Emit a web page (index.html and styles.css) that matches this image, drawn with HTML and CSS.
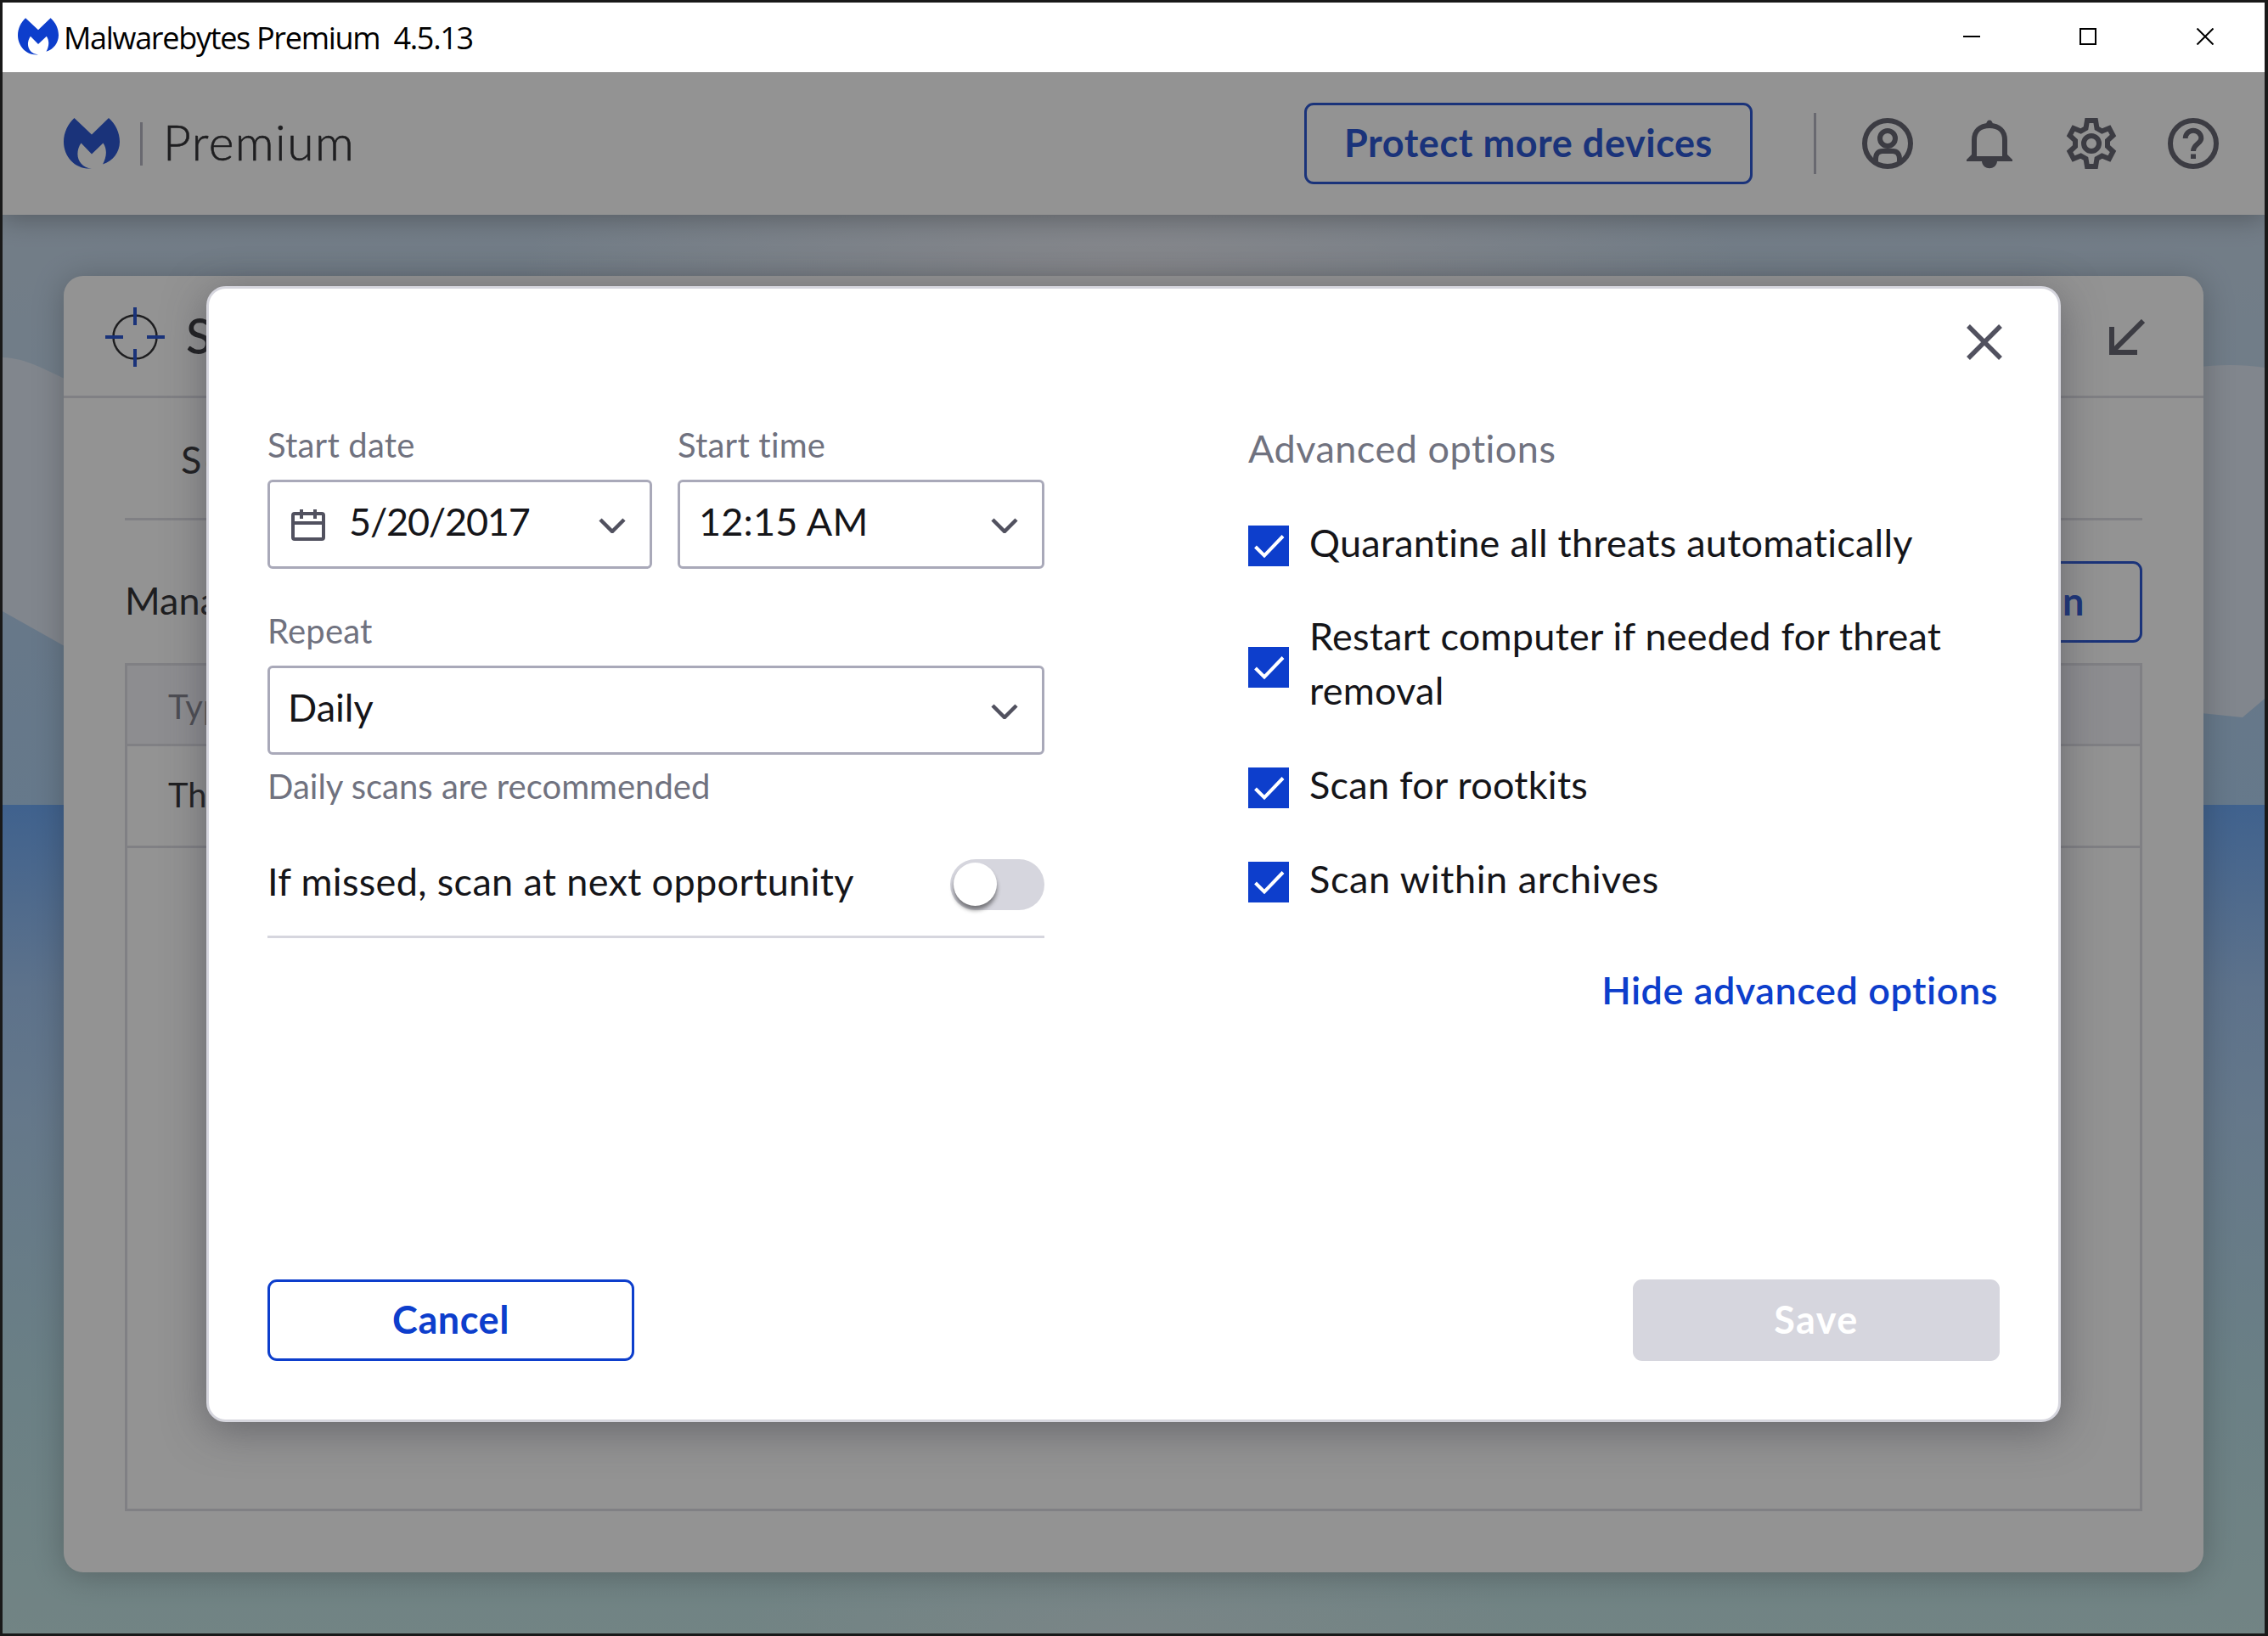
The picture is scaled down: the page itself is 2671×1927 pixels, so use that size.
FILE: index.html
```html
<!doctype html>
<html lang="en">
<head>
  <meta charset="utf-8">
  <title>Malwarebytes Premium</title>
  <link rel="stylesheet" href="styles.css">
</head>
<body>
  <div class="window">
    <div class="titlebar">
      <svg class="titlebar-logo" viewBox="0 0 66 60"><path d="M12.500 0L33 19.500L53 0C61 7 66 17 66 28C66 40 58 51 46 54.500C50 47 52 38 46.500 29.500L33 42.500L20.500 29.500C12 42 17 58 33 59.500C14 61 0 46 0 28C0 17 5 7 12.500 0Z"/></svg>
      <span class="titlebar-text">Malwarebytes Premium&nbsp; 4.5.13</span>
      <svg class="titlebar-buttons" width="295" height="20" viewBox="0 0 295 20"><path d="M0 10H20M138 1H156V19H138ZM275.500 .5L294.500 19.500M294.500 .5L275.500 19.500"/></svg>
    </div>

    <div class="app">
      <header class="header">
        <svg class="header-logo" viewBox="0 0 66 60"><path d="M12.500 0L33 19.500L53 0C61 7 66 17 66 28C66 40 58 51 46 54.500C50 47 52 38 46.500 29.500L33 42.500L20.500 29.500C12 42 17 58 33 59.500C14 61 0 46 0 28C0 17 5 7 12.500 0Z"/></svg>
        <span class="brand">Premium</span>
        <button class="btn btn-protect"><span>Protect more devices</span></button>
        <div class="header-icons">
          <svg class="icon" viewBox="0 0 60 60"><circle cx="30" cy="30" r="27"/><circle cx="30" cy="24" r="9"/><path d="M16 51V48C16 42 19 39 24 39H36C41 39 44 42 44 48V51"/></svg>
          <svg class="icon" viewBox="0 0 60 60"><path d="M12 46V26C12 15 19 9 30 9S48 15 48 26V46"/><path class="icon-fill" d="M26 8C26 .5 34 .5 34 8ZM3 51V49L9 43V45H51V43L57 49V51H39C38 62 22 62 21 51Z"/></svg>
          <svg class="icon" viewBox="0 0 60 60"><path d="M25 3H35L36.500 12L42.500 15.500L51 12L55.500 20.500L49 26.500V33.500L55.500 39.500L51 48L42.500 44.500L36.500 48L35 57H25L23.500 48L17.500 44.500L9 48L4.500 39.500L11 33.500V26.500L4.500 20.500L9 12L17.500 15.500L23.500 12Z"/><circle cx="30" cy="30" r="9"/></svg>
          <svg class="icon" viewBox="0 0 60 60"><circle cx="30" cy="30" r="27"/><path d="M20.700 24A9.300 9.300 0 0 1 39.300 24C39.300 30 30 31 30 39M30 42.500V48"/></svg>
        </div>
      </header>

      <div class="scene">
        <svg class="landscape" viewBox="0 0 2664 1671" preserveAspectRatio="none">
          <defs>
            <linearGradient id="sea" x1="0" y1="0" x2="0" y2="1">
              <stop offset="0" stop-color="#589cf4"/>
              <stop offset=".22" stop-color="#92bcee"/>
              <stop offset=".38" stop-color="#a2c8ec"/>
              <stop offset=".55" stop-color="#a8d0e6"/>
              <stop offset=".71" stop-color="#aed8e2"/>
              <stop offset="1" stop-color="#bce0e0"/>
            </linearGradient>
            <radialGradient id="glow">
              <stop offset="0" stop-color="#e6e8f0"/>
              <stop offset="1" stop-color="#e6e8f0" stop-opacity="0"/>
            </radialGradient>
          </defs>
          <ellipse cx="1330" cy="70" rx="720" ry="220" fill="url(#glow)"/>
          <path fill="#dae4f2" d="M0 168C30 169 52 184 80 196V512L0 467Z"/>
          <path fill="#dae4f2" d="M2580 180Q2625 174 2664 180V570L2638 592L2580 586Z"/>
          <rect y="695" width="2664" height="976" fill="url(#sea)"/>
          <ellipse class="reflection" cx="1330" cy="1671" rx="460" ry="130" fill="url(#glow)"/>
        </svg>
        <main class="card">
          <div class="card-head">
            <svg class="scanner-icon" viewBox="0 0 70 70"><circle cx="35" cy="35" r="25.500"/><path d="M35 0V21M35 49V70M0 35H21M49 35H70"/></svg>
            <h1>Scanner</h1>
            <svg class="collapse" viewBox="0 0 42 42"><path d="M40 2L3 39M3 9V39H33"/></svg>
          </div>
          <div class="card-body">
            <div class="tabs"><span>Scan</span></div>
            <div class="manage">
              <span>Manage</span>
              <button class="btn btn-schedule"><span>Scan</span></button>
            </div>
            <div class="table">
              <div class="table-head">Type</div>
              <div class="table-row">Threat</div>
            </div>
          </div>
        </main>
      </div>

      <div class="backdrop"></div>
    </div>
  </div>

  <section class="modal">
    <svg class="close" viewBox="0 0 42 42"><path d="M2 2L40 40M40 2L2 40"/></svg>
    <div class="columns">
      <div class="schedule">
        <div class="field-pair">
          <div class="field">
            <label>Start date</label>
            <div class="select">
              <svg class="calendar" viewBox="0 0 40 37"><path d="M4 5H36Q38 5 38 7V33Q38 35 36 35H4Q2 35 2 33V7Q2 5 4 5ZM2 16H38M12 0V11M28 0V11"/></svg>
              <span class="date">5/20/2017</span>
              <svg class="chevron" viewBox="0 0 32 18"><path d="M2 2L16 16L30 2"/></svg>
            </div>
          </div>
          <div class="field">
            <label>Start time</label>
            <div class="select">
              <span class="time">12:15 AM</span>
              <svg class="chevron" viewBox="0 0 32 18"><path d="M2 2L16 16L30 2"/></svg>
            </div>
          </div>
        </div>
        <div class="field field-repeat">
          <label>Repeat</label>
          <div class="select">
            <span>Daily</span>
            <svg class="chevron" viewBox="0 0 32 18"><path d="M2 2L16 16L30 2"/></svg>
          </div>
          <p class="hint">Daily scans are recommended</p>
        </div>
        <div class="missed">
          <span>If missed, scan at next opportunity</span>
          <div class="toggle"><div class="knob"></div></div>
        </div>
      </div>

      <div class="advanced">
        <h2>Advanced options</h2>
        <div class="check">
          <svg class="box" viewBox="0 0 48 48"><path d="M8.500 25L19 35.500L41 12.500"/></svg>
          <span>Quarantine all threats automatically</span>
        </div>
        <div class="check check-tall">
          <svg class="box" viewBox="0 0 48 48"><path d="M8.500 25L19 35.500L41 12.500"/></svg>
          <span>Restart computer if needed for threat<br>removal</span>
        </div>
        <div class="check">
          <svg class="box" viewBox="0 0 48 48"><path d="M8.500 25L19 35.500L41 12.500"/></svg>
          <span>Scan for rootkits</span>
        </div>
        <div class="check check-archives">
          <svg class="box" viewBox="0 0 48 48"><path d="M8.500 25L19 35.500L41 12.500"/></svg>
          <span>Scan within archives</span>
        </div>
        <a class="hide-link">Hide advanced options</a>
      </div>
    </div>
    <div class="actions">
      <button class="btn btn-cancel"><span>Cancel</span></button>
      <button class="btn btn-save"><span>Save</span></button>
    </div>
  </section>
</body>
</html>
```
FILE: styles.css
```css
* {
  box-sizing: border-box;
}

html, body {
  margin: 0;
  width: 2671px;
  height: 1927px;
  overflow: hidden;
}

body {
  background: #191919;
  padding: 3px 4px 3px 3px;
  font-family: Lato, "Open Sans", sans-serif;
  font-size: 45px;
  line-height: 64px;
  font-variant-ligatures: none;
  color: #151519;
}

svg {
  display: block;
  flex: none;
  fill: none;
}

span {
  white-space: nowrap;
}

.window {
  height: 1921px;
  display: flex;
  flex-direction: column;
}

.titlebar {
  height: 82px;
  background: #fff;
  display: flex;
  align-items: center;
  padding: 0 60px 2px 18px;
  color: #000;
}

.titlebar-logo {
  width: 48px;
  height: 44px;
  margin-top: -1px;
  fill: #0d3ecc;
}

.titlebar-text {
  font-family: "Open Sans", sans-serif;
  font-size: 36px;
  letter-spacing: -1.3px;
  margin: 3px 0 0 6px;
}

.titlebar-buttons {
  margin: -1px 0 0 auto;
  stroke: #000;
  stroke-width: 2;
}

.app {
  position: relative;
  flex: 1;
  display: flex;
  flex-direction: column;
  overflow: hidden;
}

/* Header */
.header {
  position: relative;
  z-index: 1;
  height: 168px;
  background: #fff;
  box-shadow: 0 6px 28px rgba(0, 0, 0, .3);
  display: flex;
  align-items: center;
  padding: 0 54px 0 72px;
}

.header-logo {
  width: 66px;
  height: 60px;
  fill: #0d3ecc;
}

.brand {
  border-left: 3px solid #aaaab9;
  height: 51px;
  line-height: 46px;
  margin-left: 24px;
  padding-left: 24px;
  font-size: 57px;
  font-weight: 300;
  letter-spacing: 1.4px;
  -webkit-text-stroke: .6px #151519;
}

.btn {
  height: 96px;
  border: 3px solid #0d3ecc;
  border-radius: 11px;
  background: #fff;
  color: #0d3ecc;
  font: 700 45px/60px Lato, "Open Sans", sans-serif;
  letter-spacing: .55px;
  padding: 0 0 3px;
}

.btn-protect {
  width: 528px;
  margin-left: auto;
}

.header-icons {
  display: flex;
  align-items: center;
  gap: 60px;
  height: 72px;
  margin-left: 72px;
  border-left: 3px solid #aaaab9;
  padding-left: 54px;
}

.icon {
  width: 60px;
  height: 60px;
  stroke: #51515f;
  stroke-width: 6;
}

.icon-fill {
  fill: #51515f;
  stroke: none;
}

/* Scanner page behind the dialog */
.scene {
  position: relative;
  flex: 1;
  padding: 72px;
  background: linear-gradient(#bed2e6, #b8d2ea 250px, #a6c8ea 500px, #a4caee 700px);
}

.landscape {
  position: absolute;
  inset: 0;
  width: 100%;
  height: 100%;
}

.reflection {
  opacity: .4;
}

.card {
  position: relative;
  height: 1527px;
  background: #fff;
  border-radius: 23px;
  box-shadow: 0 4px 36px rgba(0, 0, 0, .28);
}

.card-head {
  height: 144px;
  border-bottom: 3px solid #d9d9e0;
  display: flex;
  align-items: center;
  padding: 2px 69px 0 49px;
}

.scanner-icon {
  width: 70px;
  height: 70px;
  stroke: #0d3ecc;
  stroke-width: 4;
}

.scanner-icon circle {
  stroke: #151519;
  stroke-width: 2.5;
}

h1 {
  margin: -4px 0 0 25px;
  font-size: 57px;
  font-weight: 500;
}

.collapse {
  width: 42px;
  height: 42px;
  margin-left: auto;
  stroke: #51515f;
  stroke-width: 6;
}

.card-body {
  padding: 0 72px;
}

.tabs {
  height: 144px;
  border-bottom: 3px solid #d9d9e0;
  padding: 40px 66px;
  letter-spacing: 4px;
}

.manage {
  display: flex;
  align-items: center;
  justify-content: space-between;
  padding: 48px 0 24px;
}

.manage > span {
  margin-top: -4px;
}

.btn-schedule {
  width: 432px;
  text-align: right;
  padding-right: 65px;
}

.table {
  border: 3px solid #d9d9e0;
  height: 999px;
  font-size: 40px;
}

.table-head {
  height: 95px;
  padding: 16px 48px;
  background: #f3f3f8;
  border-bottom: 3px solid #d9d9e0;
  color: #72727f;
}

.table-row {
  height: 120px;
  padding: 25px 48px;
  border-bottom: 3px solid #d9d9e0;
}

.backdrop {
  position: absolute;
  z-index: 2;
  inset: 0;
  background: rgba(40, 40, 40, .5);
}

/* Schedule dialog */
.modal {
  position: absolute;
  z-index: 3;
  left: 243px;
  top: 337px;
  width: 2184px;
  height: 1338px;
  background: #fff;
  border: 3px solid #d6d6de;
  border-radius: 23px;
  box-shadow: 0 10px 48px rgba(60, 60, 70, .5);
  padding: 42px 69px 69px;
  display: flex;
  flex-direction: column;
}

.close {
  width: 42px;
  height: 42px;
  margin-right: -3px;
  align-self: flex-end;
  stroke: #51515f;
  stroke-width: 5.5;
}

.columns {
  display: flex;
  justify-content: space-between;
  padding-top: 68px;
}

.schedule {
  width: 915px;
}

.field-pair {
  display: grid;
  grid-template-columns: 453px 432px;
  gap: 30px;
}

label, .hint {
  display: block;
  font-size: 40px;
  line-height: 60px;
  color: #70727f;
}

label {
  padding-top: 2px;
  height: 60px;
  letter-spacing: .2px;
}

.select {
  height: 105px;
  margin-top: 13px;
  border: 3px solid #a9a9b9;
  border-radius: 6px;
  display: flex;
  align-items: center;
  padding: 0 28px 7px 21px;
}

.calendar {
  width: 40px;
  height: 37px;
  margin: 9px 28px 0 4px;
  stroke: #51515f;
  stroke-width: 4;
}

.date {
  letter-spacing: -1.2px;
}

.time {
  padding-left: 1px;
  letter-spacing: .2px;
}

.chevron {
  width: 32px;
  height: 18px;
  margin: 10px 0 0 auto;
  stroke: #51515f;
  stroke-width: 4.5;
}

.field-repeat {
  margin-top: 41px;
}

.hint {
  margin: 7px 0 0;
}

.missed {
  height: 108px;
  margin-top: 41px;
  border-bottom: 3px solid #d6d6de;
  display: flex;
  justify-content: space-between;
  align-items: flex-start;
  padding-top: 15px;
  letter-spacing: .35px;
}

.missed span {
  margin-top: -6px;
}

.toggle {
  width: 111px;
  height: 60px;
  border-radius: 30px;
  background: #d6d6de;
  padding: 4px;
}

.knob {
  width: 51px;
  height: 51px;
  border-radius: 50%;
  background: #fff;
  box-shadow: 0 5px 5px rgba(0, 0, 0, .45);
}

.advanced {
  width: 885px;
}

h2 {
  margin: 4px 0 51px;
  font-size: 45px;
  line-height: 64px;
  font-weight: 400;
  letter-spacing: .5px;
  color: #70727f;
}

.check {
  display: flex;
  align-items: center;
  gap: 24px;
  height: 64px;
  margin-bottom: 47px;
  letter-spacing: .25px;
}

.check span {
  margin-top: -9px;
}

.check-tall {
  height: 127px;
}

.check-archives {
  letter-spacing: .6px;
}

.box {
  width: 48px;
  height: 48px;
  background: #0d3ecc;
  stroke: #fff;
  stroke-width: 4;
}

.hide-link {
  display: block;
  margin: 63px 2px 0 0;
  text-align: right;
  white-space: nowrap;
  letter-spacing: .55px;
  color: #0d3ecc;
  font-weight: 600;
}

.actions {
  margin-top: auto;
  display: flex;
  justify-content: space-between;
}

.btn-cancel, .btn-save {
  width: 432px;
}

.btn-save {
  background: #d6d6de;
  border-color: #d6d6de;
  letter-spacing: 1.4px;
  color: #fff;
}
```
